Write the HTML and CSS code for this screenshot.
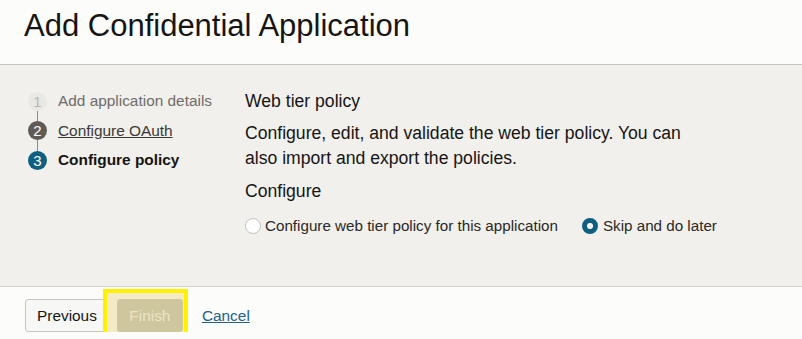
FILE: index.html
```html
<!DOCTYPE html>
<html lang="en">
<head>
    <meta charset="UTF-8">
    <meta name="viewport" content="width=device-width, initial-scale=1.0">
    <title>Add Confidential Application</title>
    <link rel="stylesheet" href="styles.css">
</head>
<body>
    <header class="page-header">
        <h1>Add Confidential Application</h1>
    </header>
    <main class="wizard">
        <ol class="steps">
            <li class="step step-done">
                <span class="step-num">1</span>
                <span class="step-label">Add application details</span>
            </li>
            <li class="step-line"></li>
            <li class="step step-visited">
                <span class="step-num">2</span>
                <a class="step-label" href="#">Configure OAuth</a>
            </li>
            <li class="step-line"></li>
            <li class="step step-current">
                <span class="step-num">3</span>
                <span class="step-label">Configure policy</span>
            </li>
        </ol>
        <section class="step-content">
            <h2>Web tier policy</h2>
            <p class="desc">Configure, edit, and validate the web tier policy. You can<br>also import and export the policies.</p>
            <h3>Configure</h3>
            <div class="radios">
                <label class="radio">
                    <span class="radio-mark"></span>
                    Configure web tier policy for this application
                </label>
                <label class="radio radio-checked">
                    <span class="radio-mark"></span>
                    Skip and do later
                </label>
            </div>
        </section>
    </main>
    <footer class="actions">
        <button class="btn">Previous</button>
        <span class="finish-wrap">
            <span class="highlight"></span>
            <button class="btn btn-disabled" disabled>Finish</button>
        </span>
        <a class="cancel" href="#">Cancel</a>
    </footer>
</body>
</html>
```

FILE: styles.css
```css
body {
    margin: 0;
    font-family: "Liberation Sans", Arial, sans-serif;
    color: #161513;
    background-color: #fcfcfb;
}
.page-header {
    height: 64px;
    border-bottom: 1px solid #c6c5c3;
    padding-left: 24px;
}
.page-header h1 {
    margin: 0;
    padding-top: 10px;
    font-size: 31px;
    line-height: 32px;
    font-weight: normal;
}
.wizard {
    display: flex;
    height: 196px;
    padding: 25px 0 0 28px;
    background-color: #f1f0ed;
    border-bottom: 1px solid #d3d2cf;
}
.steps {
    list-style: none;
    margin: 0;
    padding: 1.5px 0 0 0;
    width: 217px;
    display: flex;
    flex-direction: column;
}
.step {
    display: flex;
    align-items: center;
    height: 19px;
    font-size: 15.4px;
}
.step-num {
    width: 19px;
    height: 19px;
    border-radius: 50%;
    display: flex;
    align-items: center;
    justify-content: center;
    font-size: 15px;
    margin-right: 11px;
    flex-shrink: 0;
}
.step-line {
    width: 1px;
    height: 10.5px;
    margin-left: 9px;
    background-color: #8f8c88;
}
.step-done .step-num {
    background-color: #e9e8e5;
    color: #b9b7b4;
}
.step-done .step-label {
    color: #6f6c68;
}
.step-visited .step-num {
    background-color: #5f5a55;
    color: #ffffff;
}
.step-visited .step-label {
    color: #3d3935;
    text-decoration: underline;
}
.step-current .step-num {
    background-color: #0f5f80;
    color: #ffffff;
}
.step-current .step-label {
    font-weight: bold;
}
.step-content {
    flex: 1;
}
.step-content h2, .step-content h3 {
    margin: 0;
    font-size: 17.6px;
    line-height: 22px;
    font-weight: normal;
}
.desc {
    margin: 8.5px 0 9.5px;
    font-size: 17.6px;
    line-height: 25px;
}
.radios {
    display: flex;
    gap: 24px;
    margin-top: 13px;
    font-size: 15.2px;
    line-height: 22px;
}
.radio {
    display: flex;
    align-items: center;
    gap: 4px;
    color: #2b2825;
}
.radio-mark {
    width: 14px;
    height: 14px;
    border-radius: 50%;
    border: 1px solid #c4c2bf;
    background-color: #ffffff;
}
.radio-checked {
    gap: 5px;
}
.radio-checked .radio-mark {
    width: 6px;
    height: 6px;
    border: 5px solid #0f5f80;
}
.actions {
    display: flex;
    align-items: center;
    padding: 12px 0 0 25px;
}
.btn {
    height: 33px;
    padding: 0 11px;
    font-family: "Liberation Sans", Arial, sans-serif;
    font-size: 15.4px;
    color: #161513;
    background-color: #f7f7f6;
    border: 1px solid #c6c5c2;
    border-radius: 3px;
}
.finish-wrap {
    position: relative;
    margin-left: 8px;
}
.highlight {
    position: absolute;
    left: -14px;
    top: -10px;
    right: -5px;
    bottom: -4px;
    border: 4px solid #fff200;
    background-color: #f4ebc6;
    z-index: 1;
}
.btn-disabled {
    position: relative;
    z-index: 2;
    width: 66px;
    color: #ebe5c6;
    background-color: #cec69c;
    border-color: #cec69c;
}
.cancel {
    margin-left: 19px;
    font-size: 15.4px;
    color: #23618a;
}
```
